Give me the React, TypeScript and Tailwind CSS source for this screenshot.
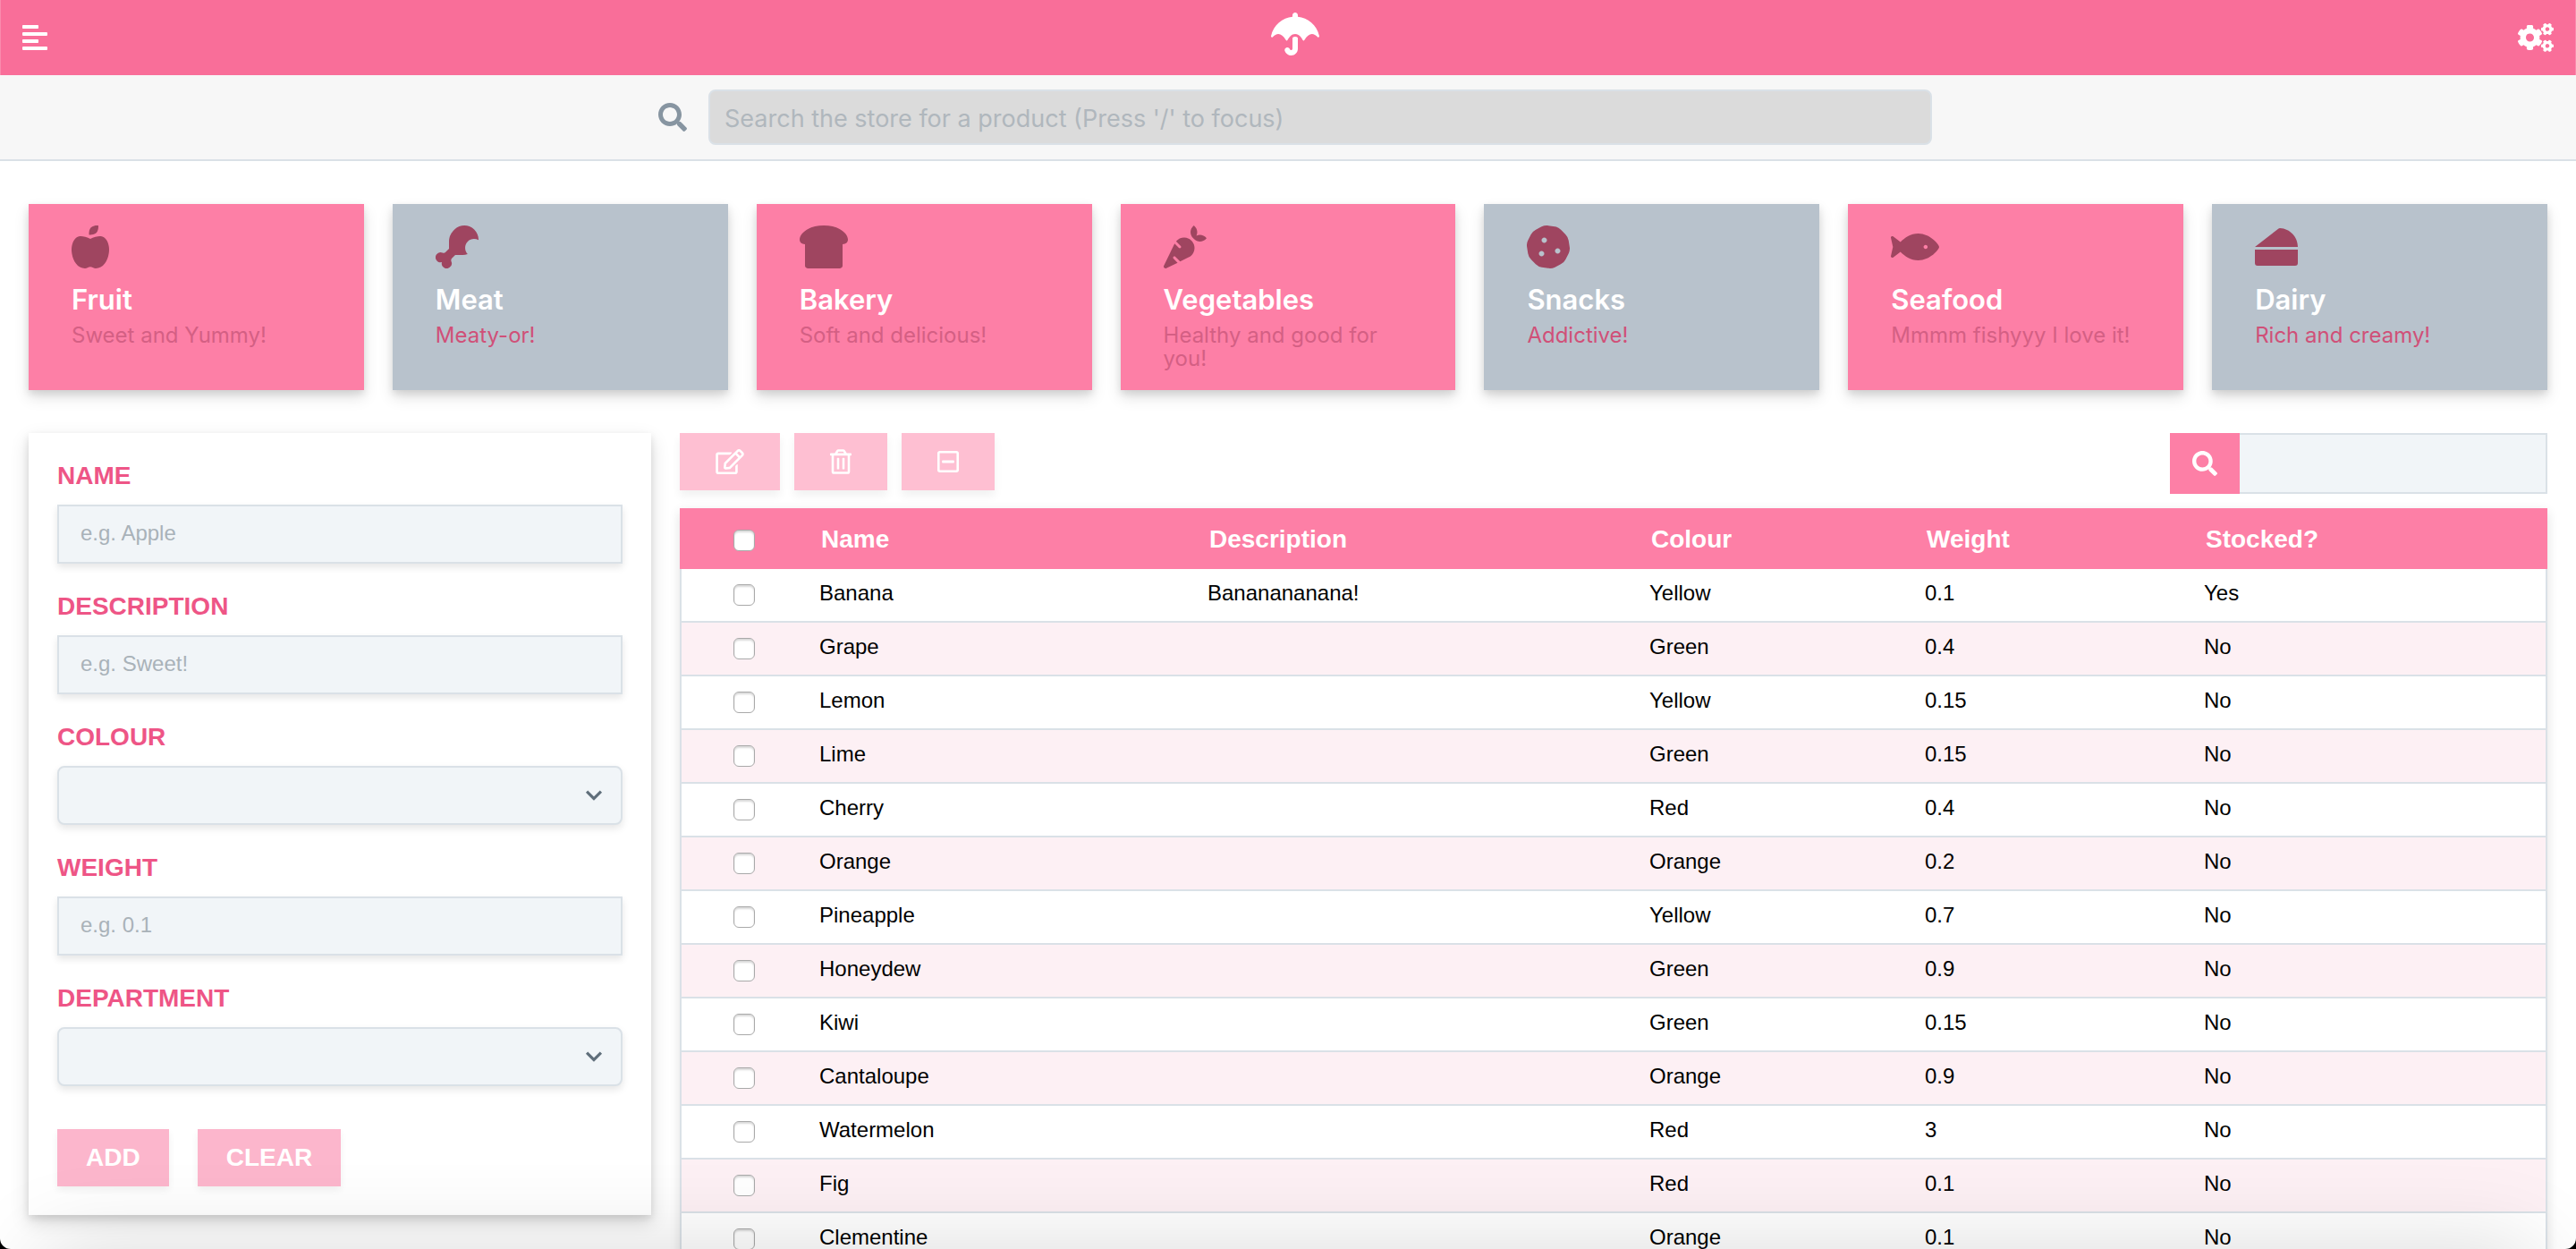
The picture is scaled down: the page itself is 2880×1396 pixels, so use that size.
import {
  FaAlignLeft,
  FaAppleAlt,
  FaBreadSlice,
  FaCarrot,
  FaCheese,
  FaCogs,
  FaCookie,
  FaDrumstickBite,
  FaFish,
  FaRegEdit,
  FaRegMinusSquare,
  FaRegTrashAlt,
  FaSearch,
  FaUmbrella,
} from "react-icons/fa";
import type { IconType } from "react-icons";

type Department = {
  name: string;
  tagline: string;
  icon: IconType;
  iconWidth: string;
  tone: "pink" | "grey";
};

const departments: Department[] = [
  { name: "Fruit", tagline: "Sweet and Yummy!", icon: FaAppleAlt, iconWidth: "w-[42px]", tone: "pink" },
  { name: "Meat", tagline: "Meaty-or!", icon: FaDrumstickBite, iconWidth: "w-12", tone: "grey" },
  { name: "Bakery", tagline: "Soft and delicious!", icon: FaBreadSlice, iconWidth: "w-[54px]", tone: "pink" },
  { name: "Vegetables", tagline: "Healthy and good for you!", icon: FaCarrot, iconWidth: "w-12", tone: "pink" },
  { name: "Snacks", tagline: "Addictive!", icon: FaCookie, iconWidth: "w-12", tone: "grey" },
  { name: "Seafood", tagline: "Mmmm fishyyy I love it!", icon: FaFish, iconWidth: "w-[54px]", tone: "pink" },
  { name: "Dairy", tagline: "Rich and creamy!", icon: FaCheese, iconWidth: "w-12", tone: "grey" },
];

type Product = {
  name: string;
  description?: string;
  colour: string;
  weight: string;
  stocked: string;
};

const products: Product[] = [
  { name: "Banana", description: "Bananananana!", colour: "Yellow", weight: "0.1", stocked: "Yes" },
  { name: "Grape", colour: "Green", weight: "0.4", stocked: "No" },
  { name: "Lemon", colour: "Yellow", weight: "0.15", stocked: "No" },
  { name: "Lime", colour: "Green", weight: "0.15", stocked: "No" },
  { name: "Cherry", colour: "Red", weight: "0.4", stocked: "No" },
  { name: "Orange", colour: "Orange", weight: "0.2", stocked: "No" },
  { name: "Pineapple", colour: "Yellow", weight: "0.7", stocked: "No" },
  { name: "Honeydew", colour: "Green", weight: "0.9", stocked: "No" },
  { name: "Kiwi", colour: "Green", weight: "0.15", stocked: "No" },
  { name: "Cantaloupe", colour: "Orange", weight: "0.9", stocked: "No" },
  { name: "Watermelon", colour: "Red", weight: "3", stocked: "No" },
  { name: "Fig", colour: "Red", weight: "0.1", stocked: "No" },
  { name: "Clementine", colour: "Orange", weight: "0.1", stocked: "No" },
];

function Header() {
  return (
    <header className="flex h-21 items-center justify-between border-x border-[#fa8bad] bg-[#f96e99] px-6 text-white">
      <button type="button" aria-label="Menu">
        <FaAlignLeft className="h-8 w-7" />
      </button>
      <a href="#" aria-label="Home" className="mb-2 ml-7">
        <FaUmbrella className="h-12 w-[54px]" />
      </a>
      <button type="button" aria-label="Settings">
        <FaCogs className="h-8 w-10" />
      </button>
    </header>
  );
}

function StoreSearch() {
  return (
    <div className="flex h-24 items-center justify-center gap-6 border-b-2 border-[#dae1e7] bg-[#f7f7f7] pl-4">
      <label htmlFor="store-search" aria-label="Search the store">
        <FaSearch className="size-8 text-[#8795a1]" />
      </label>
      <input
        id="store-search"
        type="search"
        placeholder="Search the store for a product (Press '/' to focus)"
        className="h-[62px] w-[1368px] rounded-lg border-2 border-[#dae1e7] bg-[#dbdbdb] px-4 pt-0.5 text-[27px] text-gray-700 placeholder:text-[#b0b7bd]"
      />
    </div>
  );
}

function DepartmentCard({ name, tagline, icon: Icon, iconWidth, tone }: Department) {
  return (
    <a
      href="#"
      className={
        "block min-h-52 px-12 pt-6 pb-5 shadow-[0_8px_16px_rgba(0,0,0,0.12),0_4px_8px_rgba(0,0,0,0.1)] " +
        (tone === "pink" ? "bg-[#fd7fa6]" : "bg-[#b8c2cc]")
      }
    >
      <Icon className={"h-12 text-[#9f4560] " + iconWidth} />
      <h2 className="mt-4 text-[31px] leading-[38px] font-semibold text-white">{name}</h2>
      <p
        className={
          "mt-2 text-2xl leading-[26px] " + (tone === "pink" ? "text-[#d45f84]" : "text-[#d05078]")
        }
      >
        {tagline}
      </p>
    </a>
  );
}

const fieldClass =
  "h-[66px] w-full border-2 border-[#dae1e7] bg-[#f1f5f8] px-6 pb-0.5 text-2xl text-black shadow-[0_4px_8px_rgba(0,0,0,0.1)] placeholder:text-[#a9b2b9]";
const labelClass = "text-[28px] leading-8 font-bold text-[#ee5586] uppercase";

function TextField({ id, label, placeholder }: { id: string; label: string; placeholder: string }) {
  return (
    <div className="flex flex-col gap-4">
      <label htmlFor={id} className={labelClass}>
        {label}
      </label>
      <input id={id} type="text" placeholder={placeholder} className={fieldClass} />
    </div>
  );
}

function SelectField({ id, label }: { id: string; label: string }) {
  return (
    <div className="flex flex-col gap-4">
      <label htmlFor={id} className={labelClass}>
        {label}
      </label>
      <div className="relative">
        <select id={id} className={fieldClass + " block appearance-none rounded-lg"} />
        <svg
          viewBox="0 0 20 20"
          aria-hidden="true"
          className="pointer-events-none absolute inset-y-0 right-4 my-auto size-8 fill-[#606f7b]"
        >
          <path d="M9.293 12.95l.707.707L15.657 8l-1.414-1.414L10 10.828 5.757 6.586 4.343 8z" />
        </svg>
      </div>
    </div>
  );
}

const formButtonClass =
  "h-16 bg-[#fcb6cc] px-8 text-[28px] font-bold text-white uppercase shadow-[0_4px_8px_rgba(0,0,0,0.06)]";

function ProductForm() {
  return (
    <form className="flex flex-col gap-8 self-start bg-white px-8 py-8 font-['Liberation_Sans',Arial,sans-serif] shadow-[0_8px_20px_rgba(0,0,0,0.14),0_4px_8px_rgba(0,0,0,0.1)]">
      <TextField id="name" label="Name" placeholder="e.g. Apple" />
      <TextField id="description" label="Description" placeholder="e.g. Sweet!" />
      <SelectField id="colour" label="Colour" />
      <TextField id="weight" label="Weight" placeholder="e.g. 0.1" />
      <SelectField id="department" label="Department" />
      <div className="mt-4 flex gap-8">
        <button type="button" className={formButtonClass}>
          Add
        </button>
        <button type="button" className={formButtonClass}>
          Clear
        </button>
      </div>
    </form>
  );
}

function ToolButton({
  label,
  icon: Icon,
  iconWidth,
}: {
  label: string;
  icon: IconType;
  iconWidth: string;
}) {
  return (
    <button
      type="button"
      aria-label={label}
      className="flex h-16 items-center bg-[#febfd2] px-10 text-white shadow-[0_6px_10px_rgba(0,0,0,0.06)]"
    >
      <Icon className={"h-7 " + iconWidth} />
    </button>
  );
}

function Tick({ label }: { label: string }) {
  return (
    <input
      type="checkbox"
      aria-label={label}
      className="mx-auto block size-6 appearance-none rounded-md border border-[#a9a9a9] bg-white shadow-[inset_0_2px_2px_rgba(0,0,0,0.15)] checked:bg-[#fd7fa6]"
    />
  );
}

const headings = ["Name", "Description", "Colour", "Weight", "Stocked?"];
const cellClass = "border-b-2 border-[#dae1e7] px-3.5 pb-1";

function ProductTable() {
  return (
    <section className="flex min-w-0 flex-col gap-4 font-['Liberation_Sans',Arial,sans-serif]">
      <div className="flex items-start gap-4">
        <ToolButton label="Edit" icon={FaRegEdit} iconWidth="w-8" />
        <ToolButton label="Delete" icon={FaRegTrashAlt} iconWidth="w-6" />
        <ToolButton label="Deselect" icon={FaRegMinusSquare} iconWidth="w-6" />
        <div className="ml-auto flex h-17">
          <label
            htmlFor="table-search"
            aria-label="Search products"
            className="flex items-center bg-[#fd7fa6] px-[25px] text-white"
          >
            <FaSearch className="size-7" />
          </label>
          <input
            id="table-search"
            type="search"
            className="w-86 border-2 border-l-0 border-[#dae1e7] bg-[#f1f5f8] px-4 text-2xl"
          />
        </div>
      </div>
      <table className="w-full table-fixed border-separate border-spacing-0 text-left text-2xl leading-7 text-black shadow-[0_4px_12px_rgba(0,0,0,0.12)]">
        <colgroup>
          <col className="w-[142px]" />
          <col className="w-[434px]" />
          <col className="w-[494px]" />
          <col className="w-[308px]" />
          <col className="w-[312px]" />
          <col className="w-[398px]" />
        </colgroup>
        <thead>
          <tr className="h-17 bg-[#fd7fa6] text-[28px] text-white">
            <th className="pt-1 pl-0.5">
              <Tick label="Select all" />
            </th>
            {headings.map((heading) => (
              <th key={heading} className="px-4 pt-0.5 font-bold">
                {heading}
              </th>
            ))}
          </tr>
        </thead>
        <tbody>
          {products.map((product) => (
            <tr key={product.name} className="h-15 bg-white even:bg-[#fdf0f4]">
              <td className="border-b-2 border-l-2 border-[#dae1e7]">
                <Tick label={"Select " + product.name} />
              </td>
              <td className={cellClass}>{product.name}</td>
              <td className={cellClass}>{product.description}</td>
              <td className={cellClass}>{product.colour}</td>
              <td className={cellClass}>{product.weight}</td>
              <td className={cellClass + " border-r-2"}>{product.stocked}</td>
            </tr>
          ))}
        </tbody>
      </table>
    </section>
  );
}

export default function App() {
  return (
    <div className="h-screen bg-black">
      <div className="relative h-full overflow-hidden rounded-b-xl bg-white font-[Inter,sans-serif]">
        <Header />
        <StoreSearch />
        <main className="flex flex-col gap-12 px-8 py-12">
          <nav aria-label="Departments" className="grid grid-cols-7 gap-8">
            {departments.map((department) => (
              <DepartmentCard key={department.name} {...department} />
            ))}
          </nav>
          <div className="grid grid-cols-[1fr_3fr] gap-8">
            <ProductForm />
            <ProductTable />
          </div>
        </main>
        <div className="pointer-events-none absolute inset-x-12 top-full h-40 shadow-[0_0_100px_rgba(0,0,0,0.15)]" />
      </div>
    </div>
  );
}
